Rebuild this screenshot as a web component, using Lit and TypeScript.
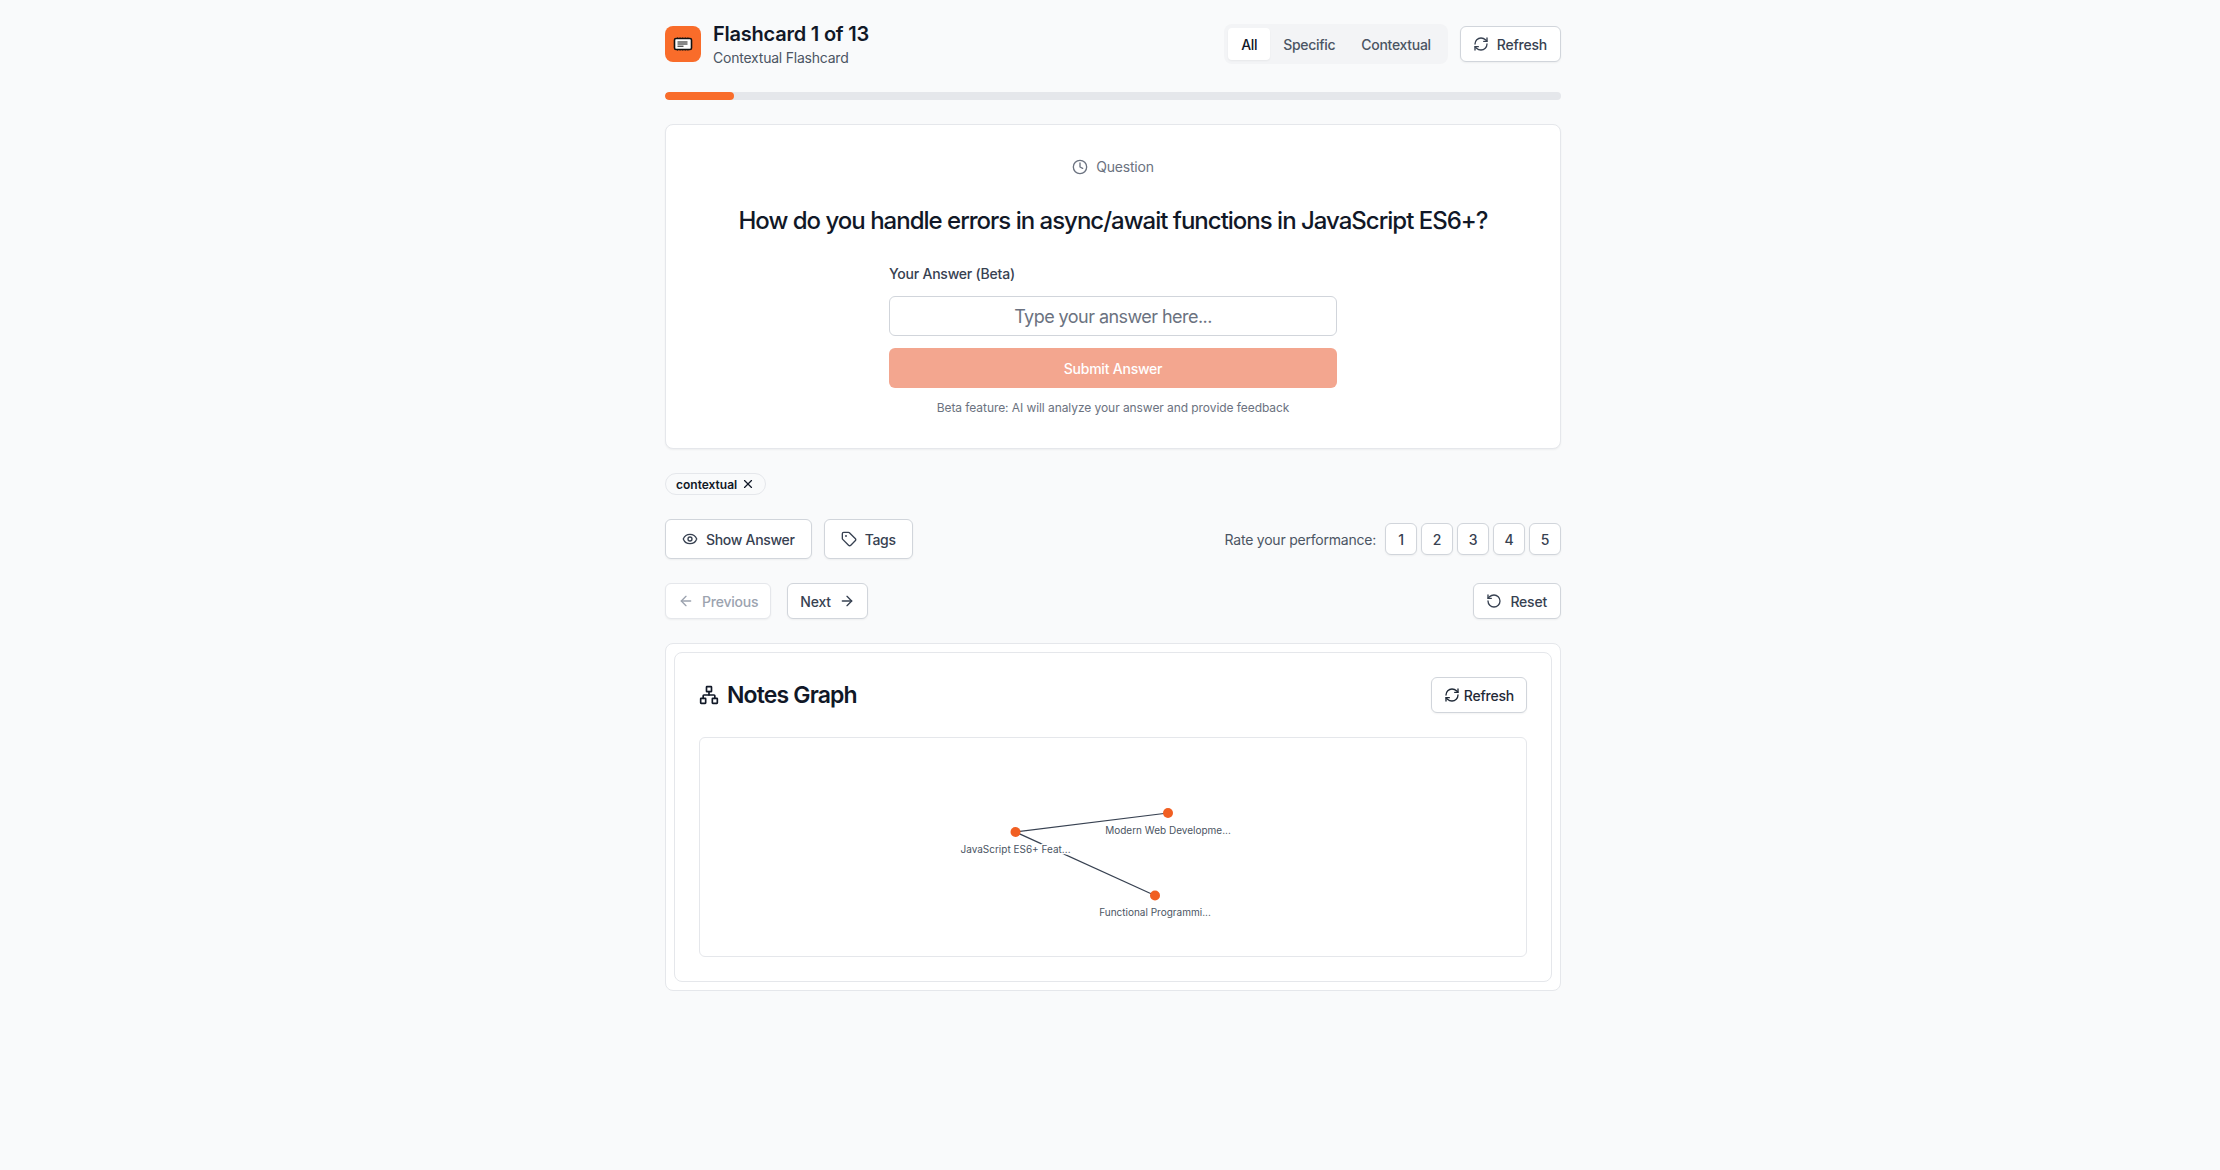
import { LitElement, html, css, svg } from "lit";
import { customElement } from "lit/decorators.js";

const ic = (size: number, body: unknown, sw = 2) => html`<svg class="ic" width=${size} height=${size} viewBox="0 0 24 24" fill="none" stroke="currentColor" stroke-width=${sw} stroke-linecap="round" stroke-linejoin="round">${body}</svg>`;

const refresh = svg`<path d="M3 12a9 9 0 0 1 9-9 9.75 9.75 0 0 1 6.74 2.74L21 8"/><path d="M21 3v5h-5"/><path d="M21 12a9 9 0 0 1-9 9 9.75 9.75 0 0 1-6.74-2.74L3 16"/><path d="M8 16H3v5"/>`;
const clock = svg`<circle cx="12" cy="12" r="10"/><polyline points="12 6 12 12 16 14"/>`;
const eye = svg`<path d="M2.06 12.35a1 1 0 0 1 0-.7 10.75 10.75 0 0 1 19.88 0 1 1 0 0 1 0 .7 10.75 10.75 0 0 1-19.88 0"/><circle cx="12" cy="12" r="3"/>`;
const tag = svg`<path d="M12.59 2.59A2 2 0 0 0 11.17 2H4a2 2 0 0 0-2 2v7.17a2 2 0 0 0 .59 1.42l8.7 8.7a2.43 2.43 0 0 0 3.42 0l6.58-6.58a2.43 2.43 0 0 0 0-3.42z"/><circle cx="7.5" cy="7.5" r=".5" fill="currentColor"/>`;
const arrowL = svg`<path d="m12 19-7-7 7-7"/><path d="M19 12H5"/>`;
const arrowR = svg`<path d="M5 12h14"/><path d="m12 5 7 7-7 7"/>`;
const rotate = svg`<path d="M3 12a9 9 0 1 0 9-9 9.75 9.75 0 0 0-6.74 2.74L3 8"/><path d="M3 3v5h5"/>`;
const x = svg`<path d="M18 6 6 18"/><path d="m6 6 12 12"/>`;
const network = svg`<rect x="16" y="16" width="6" height="6" rx=".6"/><rect x="2" y="16" width="6" height="6" rx=".6"/><rect x="9" y="2" width="6" height="6" rx=".6"/><path d="M5 16v-3a1 1 0 0 1 1-1h12a1 1 0 0 1 1 1v3"/><path d="M12 12V8"/>`;

const nodes = [
  { x: 315.5, y: 94, label: "JavaScript ES6+ Feat..." },
  { x: 468, y: 75, label: "Modern Web Developme..." },
  { x: 455, y: 157.5, label: "Functional Programmi..." },
];

@customElement("app-root")
export class AppRoot extends LitElement {
  static styles = css`
    :host { display: block; min-height: 1170px; padding-left: 6px; background: #f9fafb; font-family: Inter, "Liberation Sans", sans-serif; color: #111827; box-sizing: border-box; letter-spacing: -0.22px; }
    * { box-sizing: border-box; }
    .wrap { width: 896px; margin: 0 auto; padding-top: 24px; display: flex; flex-direction: column; }
    .ic { display: block; flex: none; }
    .header { display: flex; justify-content: space-between; align-items: center; height: 40px; }
    .brand { display: flex; align-items: center; gap: 12px; }
    .logo { width: 36px; height: 36px; border-radius: 8px; background: #f96c2a; display: flex; align-items: center; justify-content: center; }
    .brand h1 { margin: 0; font-size: 20px; line-height: 28px; font-weight: 600; color: #111827; }
    .brand p { margin: 0; font-size: 14px; line-height: 20px; color: #4b5563; }
    .title-block { display: flex; flex-direction: column; }
    .right { display: flex; align-items: center; gap: 12px; }
    .tabs { display: flex; align-items: center; height: 40px; padding: 4px; border-radius: 8px; background: #f3f4f6; }
    .tab { height: 32px; padding: 0 13px; display: flex; align-items: center; font-size: 14px; font-weight: 500; letter-spacing: -0.3px; color: #4b5563; border-radius: 4px; }
    .tab.on { background: #fff; color: #111827; box-shadow: 0 1px 2px rgba(0,0,0,.05); }
    .btn { display: inline-flex; align-items: center; justify-content: center; gap: 8px; height: 36px; padding: 0 12px; background: #fff; border: 1px solid #d1d5db; border-radius: 6px; font-size: 14px; font-weight: 500; letter-spacing: -0.22px; color: #374151; box-shadow: 0 1px 2px rgba(0,0,0,.05); font-family: inherit; }
    .btn.lg { height: 40px; padding: 0 16px; letter-spacing: -0.3px; }
    .btn.wide { padding: 0 13px 0 12px; }
    .btn.dim { color: #9ca3af; border-color: #e5e7eb; }
    .btn.tight { gap: 4px; color: #1f2937; }
    .track { margin-top: 28px; height: 8px; border-radius: 4px; background: #e5e7eb; overflow: hidden; }
    .fill { height: 100%; background: #f96c2a; border-radius: 4px; }
    .card { margin-top: 24px; height: 325px; background: #fff; border: 1px solid #e5e7eb; border-radius: 8px; box-shadow: 0 1px 2px rgba(0,0,0,.05); padding: 32px; display: flex; flex-direction: column; align-items: center; }
    .qlabel { display: flex; align-items: center; gap: 8px; font-size: 14px; line-height: 20px; color: #6b7280; }
    h2.q { margin: 28px 0 0; font-size: 24px; line-height: 32px; font-weight: 500; letter-spacing: -1px; color: #111827; text-align: center; }
    .form { width: 448px; margin-top: 27px; display: flex; flex-direction: column; }
    .form label { font-size: 14px; line-height: 20px; font-weight: 500; color: #374151; margin-bottom: 12px; }
    .input { height: 40px; border: 1px solid #d1d5db; border-radius: 6px; background: #fff; font-size: 18px; letter-spacing: -0.55px; color: #6b7280; display: flex; align-items: center; justify-content: center; }
    .submit { height: 40px; margin-top: 12px; border-radius: 6px; background: #f3a68f; color: #fff; font-size: 14px; font-weight: 500; display: flex; align-items: center; justify-content: center; }
    .note { margin-top: 12px; font-size: 12px; line-height: 16px; letter-spacing: -0.07px; color: #6b7280; text-align: center; }
    .chip { margin-top: 24px; align-self: flex-start; display: inline-flex; align-items: center; gap: 4px; height: 22px; padding: 0 10px; border: 1px solid #e5e7eb; border-radius: 999px; background: #f9fafb; font-size: 12px; font-weight: 600; letter-spacing: 0; color: #111827; }
    .row { display: flex; justify-content: space-between; align-items: center; }
    .row.acts { margin-top: 24px; }
    .row.nav { margin-top: 24px; }
    .group { display: flex; align-items: center; gap: 12px; }
    .group.nav { gap: 16px; }
    .rate { display: flex; align-items: center; gap: 4px; }
    .rate span { font-size: 14px; color: #4b5563; margin-right: 5px; }
    .num { width: 32px; height: 32px; padding: 0; font-size: 14px; }
    .outer { margin-top: 24px; background: #fff; border: 1px solid #e5e7eb; border-radius: 8px; padding: 8px; }
    .inner { border: 1px solid #e5e7eb; border-radius: 8px; padding: 24px; }
    .ghead { display: flex; justify-content: space-between; align-items: center; height: 36px; }
    .gtitle { display: flex; align-items: center; gap: 8px; font-size: 23px; font-weight: 600; letter-spacing: -0.85px; color: #111827; margin: 0; line-height: 32px; }
    .graph { margin-top: 24px; height: 220px; border: 1px solid #e5e7eb; border-radius: 6px; background: #fff; }
    .graph svg { display: block; width: 100%; height: 100%; }
    .graph text { font-size: 10px; fill: #4b5563; text-anchor: middle; letter-spacing: 0; font-family: Inter, sans-serif; paint-order: stroke; stroke: #fff; stroke-width: 3px; stroke-linejoin: round; }
  `;

  render() {
    return html`<div class="wrap">
      <header class="header">
        <div class="brand">
          <div class="logo">
            <svg width="20" height="16" viewBox="0 0 20 16" fill="none">
              <path d="M4 2h12M4 14h12" stroke="#111" stroke-width="1" stroke-dasharray="1 1.6"/>
              <rect x="1.5" y="2.5" width="17" height="11" rx="1.5" fill="#fff" stroke="#111" stroke-width="1.6"/>
              <path d="M4.5 6h10M4.5 8h10M4.5 10.2h6" stroke="#111" stroke-width="1"/>
            </svg>
          </div>
          <div class="title-block">
            <h1>Flashcard 1 of 13</h1>
            <p>Contextual Flashcard</p>
          </div>
        </div>
        <div class="right">
          <div class="tabs">
            <div class="tab on">All</div>
            <div class="tab">Specific</div>
            <div class="tab">Contextual</div>
          </div>
          <button class="btn wide">${ic(16, refresh)}Refresh</button>
        </div>
      </header>
      <div class="track"><div class="fill" style="width:${(1 / 13) * 100}%"></div></div>

      <section class="card">
        <div class="qlabel">${ic(16, clock)}Question</div>
        <h2 class="q">How do you handle errors in async/await functions in JavaScript ES6+?</h2>
        <div class="form">
          <label>Your Answer (Beta)</label>
          <div class="input">Type your answer here...</div>
          <div class="submit">Submit Answer</div>
          <div class="note">Beta feature: AI will analyze your answer and provide feedback</div>
        </div>
      </section>

      <div class="chip">contextual ${ic(14, x)}</div>

      <div class="row acts">
        <div class="group">
          <button class="btn lg">${ic(16, eye)}Show Answer</button>
          <button class="btn lg">${ic(16, tag)}Tags</button>
        </div>
        <div class="rate">
          <span>Rate your performance:</span>
          ${[1, 2, 3, 4, 5].map((n) => html`<button class="btn num">${n}</button>`)}
        </div>
      </div>

      <div class="row nav">
        <div class="group nav">
          <button class="btn dim">${ic(16, arrowL)}Previous</button>
          <button class="btn">Next${ic(16, arrowR)}</button>
        </div>
        <button class="btn wide">${ic(16, rotate)}Reset</button>
      </div>

      <section class="outer">
        <div class="inner">
          <div class="ghead">
            <h3 class="gtitle">${ic(20, network)}Notes Graph</h3>
            <button class="btn tight">${ic(16, refresh)}Refresh</button>
          </div>
          <div class="graph">
            <svg viewBox="0 0 826 218">
              <line x1=${nodes[0].x} y1=${nodes[0].y} x2=${nodes[1].x} y2=${nodes[1].y} stroke="#374151" stroke-width="1.2"/>
              <line x1=${nodes[0].x} y1=${nodes[0].y} x2=${nodes[2].x} y2=${nodes[2].y} stroke="#374151" stroke-width="1.2"/>
              ${nodes.map((n) => svg`<circle cx=${n.x} cy=${n.y} r="5" fill="#f15f22"/><text x=${n.x} y=${n.y + 20.8}>${n.label}</text>`)}
            </svg>
          </div>
        </div>
      </section>
    </div>`;
  }
}
